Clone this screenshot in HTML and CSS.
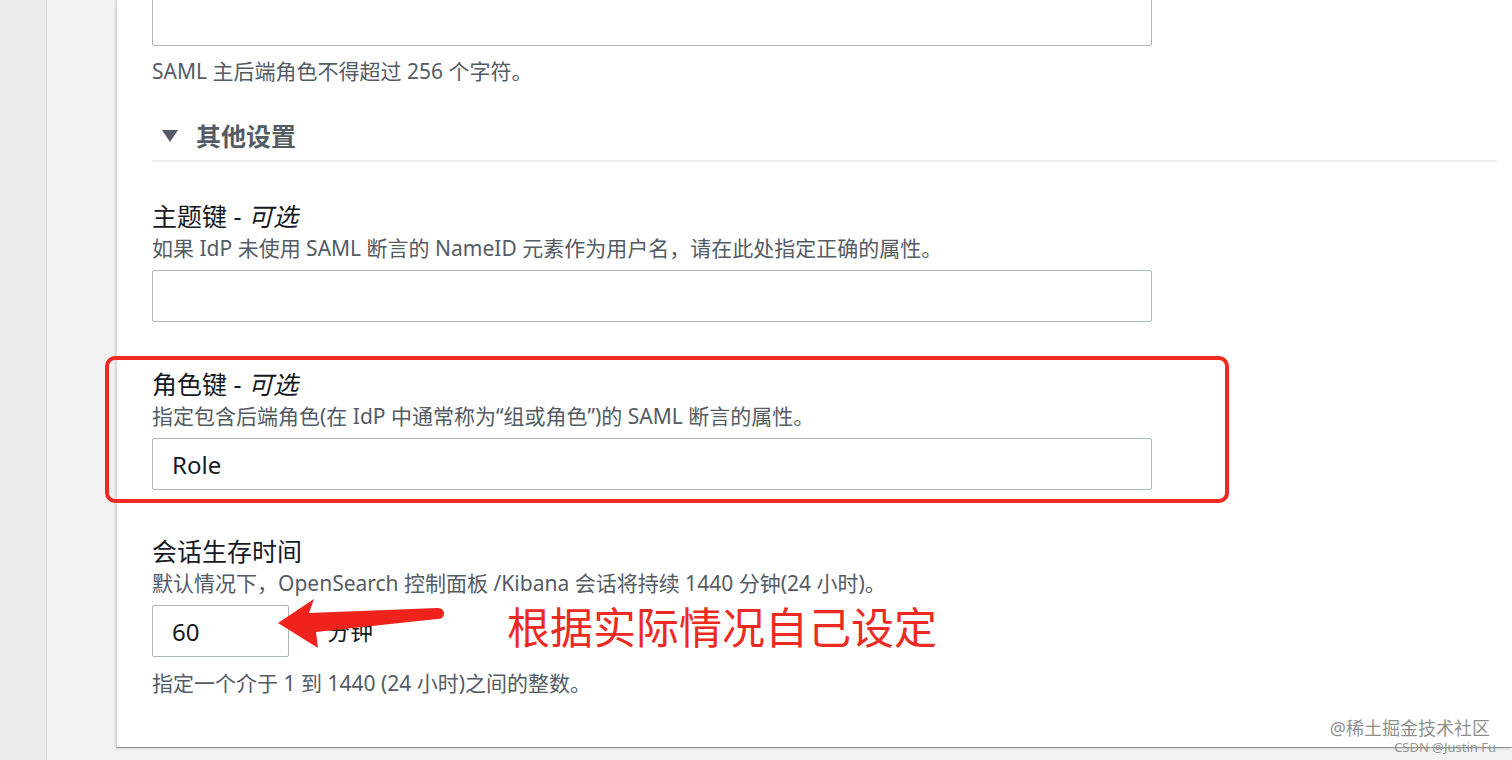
FILE: index.html
```html
<!DOCTYPE html>
<html lang="zh-CN">
<head>
<meta charset="utf-8">
<title>其他设置</title>
<link rel="stylesheet" href="styles.css">
</head>
<body>
<div class="page">
  <div class="nav-rail"></div>
  <div class="side-strip"></div>
  <main class="panel">
    <div class="panel-inner">
      <div class="input input-top"></div>
      <p class="hint hint-top">SAML 主后端角色不得超过 256 个字符。</p>

      <div class="section-head">
        <span class="caret"></span>
        <span class="section-title">其他设置</span>
      </div>

      <div class="field field-first">
        <div class="label">主题键 - <i>可选</i></div>
        <div class="desc">如果 IdP 未使用 SAML 断言的 NameID 元素作为用户名，请在此处指定正确的属性。</div>
        <div class="input"></div>
      </div>

      <div class="highlight">
        <div class="field">
          <div class="label">角色键 - <i>可选</i></div>
          <div class="desc">指定包含后端角色(在 IdP 中通常称为“组或角色”)的 SAML 断言的属性。</div>
          <div class="input"><span class="value">Role</span></div>
        </div>
      </div>

      <div class="field field-last">
        <div class="label">会话生存时间</div>
        <div class="desc">默认情况下，OpenSearch 控制面板 /Kibana 会话将持续 1440 分钟(24 小时)。</div>
        <div class="time-row">
          <div class="input input-small"><span class="value">60</span></div>
          <span class="unit">分钟</span>
          <span class="note">根据实际情况自己设定</span>
          <svg class="arrow" width="170" height="54" viewBox="0 0 170 54">
            <path d="M1 25 L37 1 L32 15 L160 10 Q167 10 167 15.5 Q167 21 160 21 L39 34 L41 50 Z" fill="#f0231c"/>
          </svg>
        </div>
        <p class="hint hint-bottom">指定一个介于 1 到 1440 (24 小时)之间的整数。</p>
      </div>
    </div>
    <div class="watermark">
      <div class="wm-main">@稀土掘金技术社区</div>
      <div class="wm-sub">CSDN @Justin Fu</div>
    </div>
  </main>
</div>
</body>
</html>
```

FILE: styles.css
```css
* { box-sizing: border-box; }
html, body {
  margin: 0;
  padding: 0;
  height: 760px;
  overflow: hidden;
  background: #f2f2f2;
  font-family: "Noto Sans", "Noto Sans CJK SC", sans-serif;
}
.page {
  display: flex;
  height: 760px;
}
.nav-rail {
  width: 47px;
  flex: none;
  background: #eaebeb;
  border-right: 1px solid #dcdddd;
}
.side-strip {
  width: 69px;
  flex: none;
  background: #f2f2f2;
}
.panel {
  position: relative;
  flex: 1;
  height: 748px;
  background: #ffffff;
  border-left: 1px solid #d6d7d7;
  border-bottom: 1px solid #8f9494;
  box-shadow: -1px 1px 2px rgba(0,0,0,0.12);
}
.panel-inner {
  padding: 0 15px 0 35px;
  margin-top: -6px;
}
.input {
  width: 1000px;
  height: 52px;
  border: 1px solid #aab7b8;
  border-radius: 2px;
  background: #fff;
  display: flex;
  align-items: center;
  padding-left: 19px;
}
.value {
  font-size: 24px;
  color: #16191f;
}
.hint {
  margin: 0;
  font-size: 21px;
  line-height: 28px;
  color: #545b64;
}
.hint-top { margin-top: 11px; }
.section-head {
  margin-top: 35px;
  height: 42px;
  display: flex;
  align-items: flex-start;
  padding-left: 10px;
  border-bottom: 2px solid #eaeded;
}
.caret {
  width: 0;
  height: 0;
  margin-top: 10px;
  border-left: 8px solid transparent;
  border-right: 8px solid transparent;
  border-top: 12px solid #545b64;
}
.section-title {
  margin-left: 18px;
  font-size: 25px;
  line-height: 32px;
  font-weight: 700;
  color: #545b64;
}
.field-first { margin-top: 39px; }
.label {
  font-size: 25px;
  line-height: 30px;
  color: #16191f;
}
.label i { font-style: italic; }
.desc {
  margin-top: 3px;
  font-size: 21px;
  line-height: 28px;
  color: #545b64;
}
.field .input { margin-top: 8px; }
.highlight {
  margin-top: 34px;
  margin-left: -47px;
  width: 1124px;
  border: 4px solid #ef2a22;
  border-radius: 10px;
  padding: 9px 0 9px 43px;
}
.field-last { margin-top: 33px; }
.time-row {
  position: relative;
  display: flex;
  align-items: center;
}
.input-small {
  width: 137px;
  flex: none;
}
.unit {
  margin-left: 38px;
  margin-top: 6px;
  font-size: 23px;
  color: #16191f;
}
.note {
  margin-left: 134px;
  margin-top: 2px;
  font-size: 43px;
  line-height: 50px;
  color: #ec2a22;
}
.arrow {
  position: absolute;
  left: 125px;
  top: 1px;
}
.hint-bottom { margin-top: 12px; }
.watermark {
  position: absolute;
  right: 14px;
  bottom: -8px;
  text-align: right;
}
.wm-main {
  font-size: 18px;
  line-height: 22px;
  color: rgba(120,120,120,0.85);
  margin-right: 8px;
}
.wm-sub {
  font-size: 13px;
  line-height: 16px;
  color: rgba(130,130,130,0.85);
  margin-right: 2px;
}
```
